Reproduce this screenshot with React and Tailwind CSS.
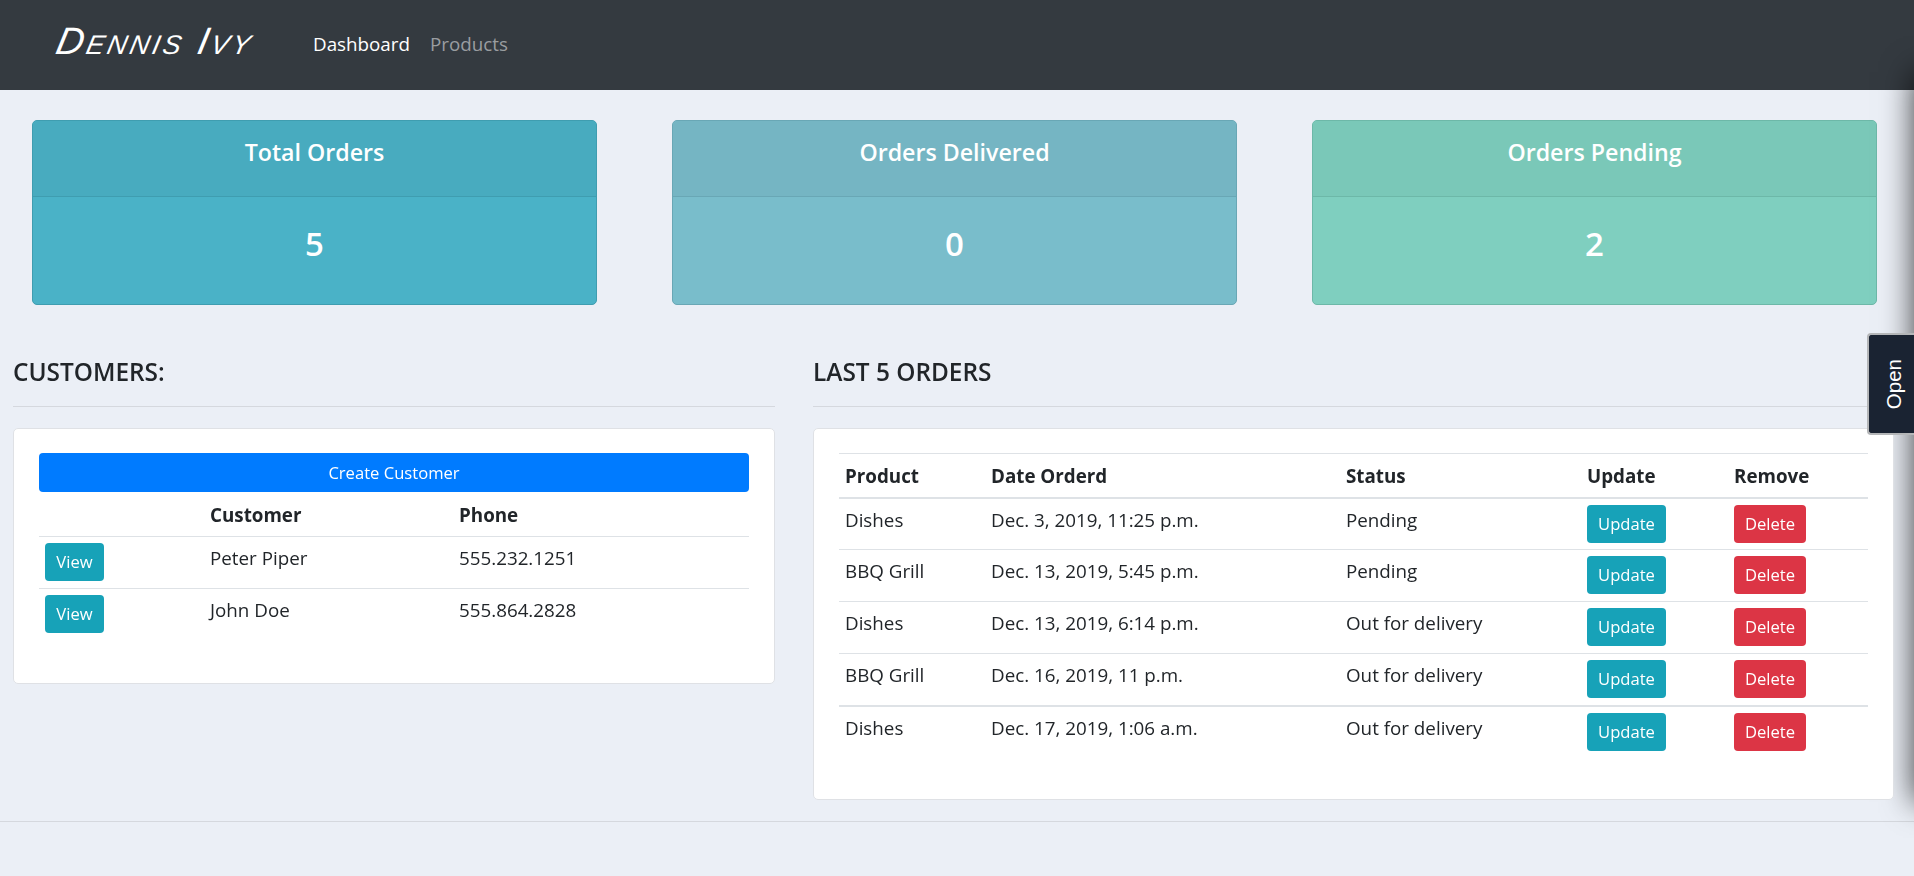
const font = { fontFamily: '"Open Sans", "Noto Sans", sans-serif' };

function Stat({ title, value, body, head, border }) {
  return (
    <div className={`flex-1 rounded-[5px] border ${border} ${body} text-white overflow-hidden`}>
      <div className={`h-[76px] border-b ${border} ${head} flex items-start justify-center pt-[13px] text-[23.2px] leading-[36px] font-semibold`}>
        {title}
      </div>
      <div className="h-[107px] flex items-start justify-center pt-[25px] text-[33px] leading-[44px] font-semibold">
        {value}
      </div>
    </div>
  );
}

function Btn({ color, width, children }) {
  return (
    <button className={`${color} ${width} block h-[38px] rounded-[4px] text-white text-[16.6px] leading-[38px] text-center`}>
      {children}
    </button>
  );
}

const customers = [
  ['Peter Piper', '555.232.1251'],
  ['John Doe', '555.864.2828'],
];

const orders = [
  ['Dishes', 'Dec. 3, 2019, 11:25 p.m.', 'Pending'],
  ['BBQ Grill', 'Dec. 13, 2019, 5:45 p.m.', 'Pending'],
  ['Dishes', 'Dec. 13, 2019, 6:14 p.m.', 'Out for delivery'],
  ['BBQ Grill', 'Dec. 16, 2019, 11 p.m.', 'Out for delivery'],
  ['Dishes', 'Dec. 17, 2019, 1:06 a.m.', 'Out for delivery'],
];

export default function App() {
  return (
    <div style={font} className="min-h-screen bg-[#ebeff6] text-[#212529] text-[18.8px] leading-[28px] overflow-hidden">
      <nav className="h-[90px] bg-[#343a40] flex items-center">
        <span
          className="ml-[57px] w-[198px] -mt-[8px] text-white text-[38px] leading-[40px] italic -skew-x-12 tracking-[3px] whitespace-nowrap"
          style={{ fontFamily: '"Liberation Sans", sans-serif', fontVariant: 'small-caps' }}
        >
          Dennis Ivy
        </span>
        <a className="ml-[58px] -mt-[2px] text-white">Dashboard</a>
        <a className="ml-[20px] -mt-[2px] text-[#9a9da0]">Products</a>
      </nav>

      <section className="flex gap-[75px] pl-[32px] pr-[37px] pt-[30px]">
        <Stat title="Total Orders" value="5" body="bg-[#4ab2c7]" head="bg-[#48abbf]" border="border-[#3f9db0]" />
        <Stat title="Orders Delivered" value="0" body="bg-[#79bdcb]" head="bg-[#75b5c3]" border="border-[#69a7b5]" />
        <Stat title="Orders Pending" value="2" body="bg-[#7fcfbf]" head="bg-[#7ac8b8]" border="border-[#6db8a8]" />
      </section>

      <section className="relative z-10 flex gap-[38px] pl-[13px] pr-[20px] pt-[52px] items-start">
        <div className="w-[762px]">
          <h5 className="h-[49px] -mt-[2px] mb-[2px] text-[24.4px] leading-[34px] font-semibold">CUSTOMERS:</h5>
          <hr className="border-t border-[#d5d8de]" />
          <div className="mt-[21px] h-[256px] bg-white rounded-[5px] border border-[#dfe1e5] pt-[24px] px-[25px]">
            <button className="w-full h-[39px] rounded-[4px] bg-[#007bff] text-white text-[16.6px] leading-[39px]">Create Customer</button>
            <table className="w-full table-fixed border-collapse">
              <colgroup>
                <col className="w-[165px]" />
                <col className="w-[249px]" />
                <col />
              </colgroup>
              <thead>
                <tr className="h-[44px] border-b border-[#dee2e6] text-left">
                  <th className="px-[6px] pt-[2px]"></th>
                  <th className="px-[6px] pt-[2px] font-bold">Customer</th>
                  <th className="px-[6px] pt-[2px] font-bold">Phone</th>
                </tr>
              </thead>
              <tbody>
                {customers.map(([name, phone], i) => (
                  <tr key={name} className={`h-[52px] ${i === 0 ? 'border-b border-[#dee2e6]' : ''}`}>
                    <td className="px-[6px] pt-[6px] align-top"><Btn color="bg-[#17a2b8]" width="w-[59px]">View</Btn></td>
                    <td className="px-[6px] pt-[7px] align-top">{name}</td>
                    <td className="px-[6px] pt-[7px] align-top">{phone}</td>
                  </tr>
                ))}
              </tbody>
            </table>
          </div>
        </div>

        <div className="flex-1">
          <h5 className="h-[49px] -mt-[2px] mb-[2px] text-[24.4px] leading-[34px] font-semibold">LAST 5 ORDERS</h5>
          <hr className="border-t border-[#d5d8de]" />
          <div className="mt-[21px] h-[372px] bg-white rounded-[5px] border border-[#dfe1e5] pt-[24px] px-[25px]">
            <table className="w-full table-fixed border-collapse">
              <colgroup>
                <col className="w-[146px]" />
                <col className="w-[355px]" />
                <col className="w-[241px]" />
                <col className="w-[147px]" />
                <col />
              </colgroup>
              <thead>
                <tr className="h-[44px] border-t border-b-2 border-[#dee2e6] text-left">
                  <th className="px-[6px] pt-[2px] font-bold">Product</th>
                  <th className="px-[6px] pt-[2px] font-bold">Date Orderd</th>
                  <th className="px-[6px] pt-[2px] font-bold">Status</th>
                  <th className="px-[6px] pt-[2px] font-bold">Update</th>
                  <th className="px-[6px] pt-[2px] font-bold">Remove</th>
                </tr>
              </thead>
              <tbody>
                {orders.map(([product, date, status], i) => (
                  <tr
                    key={date}
                    className={`h-[52px] border-[#dee2e6] ${i < 3 ? 'border-b' : ''} ${i === 3 ? 'border-b-2' : ''}`}
                  >
                    <td className="px-[6px] pt-[7px] align-top">{product}</td>
                    <td className="px-[6px] pt-[7px] align-top">{date}</td>
                    <td className="px-[6px] pt-[7px] align-top">{status}</td>
                    <td className="px-[6px] pt-[6px] align-top"><Btn color="bg-[#17a2b8]" width="w-[79px]">Update</Btn></td>
                    <td className="px-[6px] pt-[6px] align-top"><Btn color="bg-[#dc3545]" width="w-[72px]">Delete</Btn></td>
                  </tr>
                ))}
              </tbody>
            </table>
          </div>
        </div>
      </section>

      <hr className="mt-[21px] border-t border-[#d5d8de]" />

      <div className="fixed left-full top-[72px] h-[730px] w-[300px] shadow-[0_0_30px_rgba(0,0,0,0.75)]"></div>

      <div
        className="fixed right-0 top-[333px] z-20 h-[102px] w-[47px] rounded-l-[4px] border-2 border-r-0 border-[#b4b6b8] bg-[#1a2332] text-white flex items-center justify-center pl-[6px] text-[20.5px] leading-none"
        style={{ fontFamily: '"Liberation Sans", sans-serif' }}
      >
        <span className="[writing-mode:vertical-rl] rotate-180">Open</span>
      </div>
    </div>
  );
}
